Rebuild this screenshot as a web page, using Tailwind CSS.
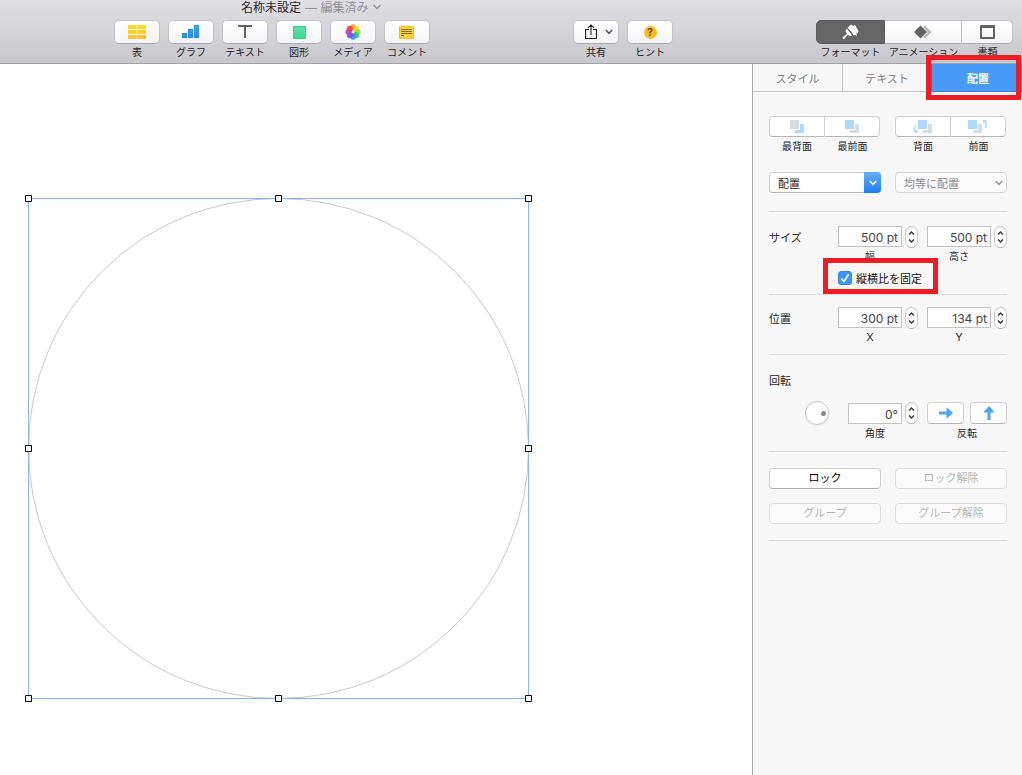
<!DOCTYPE html>
<html lang="ja">
<head>
    <meta charset="UTF-8">
    <meta name="viewport" content="width=device-width, initial-scale=1.0">
    <title>名称未設定</title>
    <script src="https://cdn.jsdelivr.net/npm/@tailwindcss/browser@4"></script>
</head>
<body class="relative flex flex-col min-h-screen bg-white text-[#262626] text-[11px] leading-4 font-['Inter','Noto_Sans_CJK_JP',sans-serif]">
    <!-- Toolbar -->
    <header class="h-16 shrink-0 border-b border-[#a2a1a6] bg-linear-to-b from-[#e0dfe3] to-[#c8c7cc]">
        <h1 class="h-5 pl-[241px] flex text-xs leading-4">
            <span>名称未設定</span>
            <span class="ml-1 text-[#929196]">— 編集済み</span>
            <svg class="ml-1 mt-1 w-2.5 h-1.5" viewBox="0 0 10 6" fill="none" stroke="#929196" stroke-width="1.3"><path d="M1.500 1l3.500 3.500L8.500 1"/></svg>
        </h1>
        <div class="flex text-[10px] leading-4 text-[#1c1c1e]">
            <div class="ml-[114px] flex gap-2">
                <div class="w-[46px] flex flex-col items-center whitespace-nowrap">
                    <button aria-labelledby="t1" class="w-full h-6 flex items-center justify-center rounded-[5px] border border-[#c3c2c7] border-b-[#adacb0] bg-linear-to-b from-white to-[#f4f4f4]">
                        <svg width="18" height="14" viewBox="0 0 18 14"><path fill="#fbdc2b" d="M0 0h18v5H0z"/><path fill="#fdce36" d="M0 5h18v4H0z"/><path fill="#fbc23a" d="M0 9h18v5H0z"/><path stroke="#fff6c8" d="M9 0v14M0 4.500h18M0 9.500h18"/></svg>
                    </button>
                    <span id="t1">表</span>
                </div>
                <div class="w-[46px] flex flex-col items-center whitespace-nowrap">
                    <button aria-labelledby="t2" class="w-full h-6 flex items-center justify-center rounded-[5px] border border-[#c3c2c7] border-b-[#adacb0] bg-linear-to-b from-white to-[#f4f4f4]">
                        <svg width="18" height="14" viewBox="0 0 18 14"><defs><linearGradient id="bar" x1="0" y1="0" x2="0" y2="1"><stop stop-color="#41b3ea"/><stop offset="1" stop-color="#2488e8"/></linearGradient></defs><path fill="url(#bar)" d="M0 8h5v5H0zM6 4h5v9H6zM12 0h5v13h-5z"/><path fill="none" stroke="#2a84d0" stroke-opacity=".6" d="M.5 8.500h4v4h-4zM6.500 4.500h4v8h-4zM12.500.500h4v12h-4z"/></svg>
                    </button>
                    <span id="t2">グラフ</span>
                </div>
                <div class="w-[46px] flex flex-col items-center whitespace-nowrap">
                    <button aria-labelledby="t3" class="w-full h-6 flex items-center justify-center rounded-[5px] border border-[#c3c2c7] border-b-[#adacb0] bg-linear-to-b from-white to-[#f4f4f4]">
                        <svg width="14" height="14" viewBox="0 0 14 14"><path fill="#636363" d="M0 0h14v2H8v11H6V2H0z"/></svg>
                    </button>
                    <span id="t3">テキスト</span>
                </div>
                <div class="w-[46px] flex flex-col items-center whitespace-nowrap">
                    <button aria-labelledby="t4" class="w-full h-6 flex items-center justify-center rounded-[5px] border border-[#c3c2c7] border-b-[#adacb0] bg-linear-to-b from-white to-[#f4f4f4]">
                        <span class="w-[13px] h-[13px] border border-[#3fcf91] bg-linear-to-b from-[#58dcb0] to-[#41dc90]"></span>
                    </button>
                    <span id="t4">図形</span>
                </div>
                <div class="w-[46px] flex flex-col items-center whitespace-nowrap">
                    <button aria-labelledby="t5" class="w-full h-6 flex items-center justify-center rounded-[5px] border border-[#c3c2c7] border-b-[#adacb0] bg-linear-to-b from-white to-[#f4f4f4]">
                        <svg width="16" height="16" viewBox="-8 -8 16 16" fill-opacity=".9">
                            <ellipse cy="-4.500" rx="2.800" ry="3.200" fill="#fb9a1e"/>
                            <ellipse cy="-4.500" rx="2.800" ry="3.200" fill="#f7dc2a" transform="rotate(45)"/>
                            <ellipse cy="-4.500" rx="2.800" ry="3.200" fill="#a8d63c" transform="rotate(90)"/>
                            <ellipse cy="-4.500" rx="2.800" ry="3.200" fill="#2fc76d" transform="rotate(135)"/>
                            <ellipse cy="-4.500" rx="2.800" ry="3.200" fill="#2f8fe6" transform="rotate(180)"/>
                            <ellipse cy="-4.500" rx="2.800" ry="3.200" fill="#6f50e0" transform="rotate(225)"/>
                            <ellipse cy="-4.500" rx="2.800" ry="3.200" fill="#c53bd6" transform="rotate(270)"/>
                            <ellipse cy="-4.500" rx="2.800" ry="3.200" fill="#f2383f" transform="rotate(315)"/>
                        </svg>
                    </button>
                    <span id="t5">メディア</span>
                </div>
                <div class="w-[46px] flex flex-col items-center whitespace-nowrap">
                    <button aria-labelledby="t6" class="w-full h-6 flex items-center justify-center rounded-[5px] border border-[#c3c2c7] border-b-[#adacb0] bg-linear-to-b from-white to-[#f4f4f4]">
                        <svg width="16" height="13" viewBox="0 0 16 13"><path fill="#fdd23a" stroke="#f0bc2a" d="M.5.500h14v12H.5z"/><path stroke="#8a6a1e" d="M2 3.500h11M2 5.500h11M2 7.500h11M2 9.500h3"/></svg>
                    </button>
                    <span id="t6">コメント</span>
                </div>
            </div>
            <div class="ml-[143px] flex gap-2">
                <div class="w-[46px] flex flex-col items-center whitespace-nowrap">
                    <button aria-labelledby="t7" class="w-full h-6 pl-1.5 flex items-center justify-center gap-2 rounded-[5px] border border-[#c3c2c7] border-b-[#adacb0] bg-linear-to-b from-white to-[#f4f4f4]">
                        <svg width="12" height="16" viewBox="0 0 12 16" fill="none" stroke="#222" stroke-width="1.100"><path d="M4 5.500H.600v9h10.800v-9H8M6 11V1M3 3.800L6 .900l3 2.900"/></svg>
                        <svg width="8" height="6" viewBox="0 0 8 6" fill="none" stroke="#555" stroke-width="1.500"><path d="M.800 1L4 4.300 7.200 1"/></svg>
                    </button>
                    <span id="t7">共有</span>
                </div>
                <div class="w-[46px] flex flex-col items-center whitespace-nowrap">
                    <button aria-labelledby="t8" class="w-full h-6 flex items-center justify-center rounded-[5px] border border-[#c3c2c7] border-b-[#adacb0] bg-linear-to-b from-white to-[#f4f4f4]">
                        <span class="w-[13px] h-[13px] rounded-full bg-[#fdb924] text-center text-[10px] leading-[13px] font-bold text-[#5f4310]">?</span>
                    </button>
                    <span id="t8">ヒント</span>
                </div>
            </div>
            <div class="ml-auto mr-[9px] flex">
                <div class="w-[69px] flex flex-col items-center whitespace-nowrap">
                    <button aria-labelledby="t9" class="w-full h-6 flex items-center justify-center rounded-l-[5px] border border-[#5b5b5c] bg-[#656566]">
                        <svg width="17" height="16" viewBox="0 0 17 16"><path fill="#fff" d="M5.500 3.800L9 .600l2.200 1.300L13 1l3.500 6.300-.8 2.500-1.200-1.500.2 4-1.700-1.600-1.200.900L9.500 8z"/><path fill="#fff" d="M5 4.600l5.200 7-2.600.300-1.800-1.500-3.200 4.300c-.7.800-2 .500-2.100-.6 0-.6.300-1 .8-1.300L5 9.800 3.400 7.200z"/><path stroke="#656566" stroke-width=".9" d="M5.500 4.500l5 6.200"/></svg>
                    </button>
                    <span id="t9">フォーマット</span>
                </div>
                <div class="w-[77px] flex flex-col items-center whitespace-nowrap">
                    <button aria-labelledby="t10" class="w-full h-6 flex items-center justify-center border-y border-r border-[#c3c2c7] border-b-[#adacb0] bg-linear-to-b from-white to-[#f4f4f4]">
                        <svg width="18" height="14" viewBox="0 0 18 14"><path fill="#b9b9b9" d="M9 2l2-1.500L17.500 7 11 13.500 9 12l5-5z"/><path fill="#636363" d="M6.500.500L13 7l-6.500 6.500L0 7z"/></svg>
                    </button>
                    <span id="t10">アニメーション</span>
                </div>
                <div class="w-[51px] flex flex-col items-center whitespace-nowrap">
                    <button aria-labelledby="t11" class="w-full h-6 flex items-center justify-center rounded-r-[5px] border-y border-r border-[#c3c2c7] border-b-[#adacb0] bg-linear-to-b from-white to-[#f4f4f4]">
                        <svg width="15" height="14" viewBox="0 0 15 14"><path fill="#636363" fill-rule="evenodd" d="M1 0h13a1 1 0 0 1 1 1v12a1 1 0 0 1-1 1H1a1 1 0 0 1-1-1V1a1 1 0 0 1 1-1zm1 3v9h11V3z"/></svg>
                    </button>
                    <span id="t11">書類</span>
                </div>
            </div>
        </div>
    </header>

    <div class="flex flex-1">
        <!-- Canvas -->
        <main class="relative flex-1">
            <svg class="absolute left-6 top-[130px]" width="510" height="510" viewBox="0 0 510 510" fill="none">
                <circle cx="254.500" cy="254.500" r="250" stroke="#c8c8c8"/>
                <path stroke="#8fb1f5" d="M4.500 4.500h500v500h-500z"/>
                <g fill="#fff" stroke="#000">
                    <path d="M1.500 1.500h6v6h-6zM251.500 1.500h6v6h-6zM501.500 1.500h6v6h-6z"/>
                    <path d="M1.500 251.500h6v6h-6zM501.500 251.500h6v6h-6z"/>
                    <path d="M1.500 501.500h6v6h-6zM251.500 501.500h6v6h-6zM501.500 501.500h6v6h-6z"/>
                </g>
            </svg>
        </main>

        <!-- Inspector -->
        <aside class="w-[270px] shrink-0 border-l border-[#a9a9a9] bg-[#f7f7f7]">
            <nav class="h-7 flex text-[#808080]">
                <button class="w-[90px] pt-0.5 border-r border-b border-[#c5c6c9]">スタイル</button>
                <button class="w-[89px] pt-0.5 border-r border-b border-[#c5c6c9] border-r-[#2f75c8]">テキスト</button>
                <button class="flex-1 pt-0.5 pl-0.5 border-b border-[#3b80d2] bg-[#489bf8] font-bold text-white">配置</button>
            </nav>
            <div class="pl-4 pr-[15px]">
                <section class="pt-6 pb-[18px] border-b border-[#dcdcdc]">
                    <div class="flex justify-between text-[10px] leading-[18px]">
                        <div class="w-[111px] flex">
                            <div class="w-14 flex flex-col items-center">
                                <button aria-labelledby="o1" class="w-full h-[21px] flex items-center justify-center rounded-l-[4px] border border-[#cfcfcf] border-b-[#b5b5b5] bg-white">
                                    <svg width="14" height="13" viewBox="0 0 14 13"><path fill="#afd9fc" d="M5 4h9v9H5z"/><path fill="#fff" d="M0 0h10v10H0z"/><path fill="#d6dce4" d="M0 0h9v9H0z"/></svg>
                                </button>
                                <span id="o1">最背面</span>
                            </div>
                            <div class="w-[55px] flex flex-col items-center">
                                <button aria-labelledby="o2" class="w-full h-[21px] flex items-center justify-center rounded-r-[4px] border-y border-r border-[#cfcfcf] border-b-[#b5b5b5] bg-white">
                                    <svg width="14" height="13" viewBox="0 0 14 13"><path fill="#d6dce4" d="M5 4h9v9H5z"/><path fill="#fff" d="M0 0h10v10H0z"/><path fill="#afd9fc" d="M0 0h9v9H0z"/></svg>
                                </button>
                                <span id="o2">最前面</span>
                            </div>
                        </div>
                        <div class="w-28 flex">
                            <div class="w-14 flex flex-col items-center">
                                <button aria-labelledby="o3" class="w-full h-[21px] flex items-center justify-center rounded-l-[4px] border border-[#cfcfcf] border-b-[#b5b5b5] bg-white">
                                    <svg width="20" height="14" viewBox="0 0 20 14"><path fill="#d6dce4" d="M10 4h9v9h-9z"/><path fill="#fff" d="M5 0h10v10H5z"/><path fill="#afd9fc" d="M5 0h9v9H5zM0 10.500l4.500-.5-.5 4z"/><path fill="none" stroke="#afd9fc" stroke-width="1.500" d="M3 5C.8 6.500.8 9 2.500 12"/></svg>
                                </button>
                                <span id="o3">背面</span>
                            </div>
                            <div class="w-[55px] flex flex-col items-center">
                                <button aria-labelledby="o4" class="w-full h-[21px] flex items-center justify-center rounded-r-[4px] border-y border-r border-[#cfcfcf] border-b-[#b5b5b5] bg-white">
                                    <svg width="20" height="14" viewBox="0 0 20 14"><path fill="#d6dce4" d="M5 4h9v9H5z"/><path fill="#fff" d="M0 0h10v10H0z"/><path fill="#afd9fc" d="M0 0h9v9H0zM14.500 0h4.500l-3.500 3.500z"/><path fill="none" stroke="#afd9fc" stroke-width="1.500" d="M17 8c2-2 2-4.500-.5-6.500"/></svg>
                                </button>
                                <span id="o4">前面</span>
                            </div>
                        </div>
                    </div>
                    <div class="mt-[17px] flex justify-between">
                        <div class="relative w-28">
                            <select aria-label="配置" class="w-full h-[21px] pl-2 pt-0.5 block appearance-none rounded-[4px] border border-[#cfcfcf] border-b-[#b5b5b5] bg-white">
                                <option>配置</option>
                            </select>
                            <span class="absolute right-0 top-0 w-[17px] h-[21px] flex items-center justify-center rounded-r-[4px] bg-linear-to-b from-[#65b0f8] to-[#1a7bfb] pointer-events-none">
                                <svg width="8" height="6" viewBox="0 0 8 6" fill="none" stroke="#fff" stroke-width="1.500"><path d="M.800 1L4 4.300 7.200 1"/></svg>
                            </span>
                        </div>
                        <div class="relative w-28">
                            <select aria-label="均等に配置" disabled class="w-full h-[21px] pl-2 pt-0.5 block appearance-none rounded-[4px] border border-[#d6d6d6] bg-[#fafafa] text-[#8a8a8a] opacity-100">
                                <option>均等に配置</option>
                            </select>
                            <svg class="absolute right-1 top-2 pointer-events-none" width="8" height="6" viewBox="0 0 8 6" fill="none" stroke="#999" stroke-width="1.500"><path d="M.800 1L4 4.300 7.200 1"/></svg>
                        </div>
                    </div>
                </section>

                <section class="pt-[14px] pb-[7px] border-b border-[#dcdcdc]">
                    <div class="flex">
                        <h2 class="w-[69px] leading-6">サイズ</h2>
                        <div class="flex gap-[9px]">
                            <div>
                                <div class="flex gap-[3px]">
                                    <input id="width" type="text" value="500 pt" class="w-16 h-[21px] pt-0.5 pr-[3px] border border-[#c2c2c2] bg-white text-right text-xs text-[#444]">
                                    <button aria-label="幅を増減" class="w-[13px] h-[22px] flex items-center justify-center rounded-full border border-[#c9c9c9] border-b-[#b2b2b2] bg-white">
                                        <svg width="7" height="12" viewBox="0 0 7 12" fill="none" stroke="#333" stroke-width="1.400"><path d="M1 3.500L3.500 1 6 3.500M1 8.500L3.500 11 6 8.500"/></svg>
                                    </button>
                                </div>
                                <label for="width" class="block w-16 text-center text-[10px] leading-4">幅</label>
                            </div>
                            <div>
                                <div class="flex gap-[3px]">
                                    <input id="height" type="text" value="500 pt" class="w-16 h-[21px] pt-0.5 pr-[3px] border border-[#c2c2c2] bg-white text-right text-xs text-[#444]">
                                    <button aria-label="高さを増減" class="w-[13px] h-[22px] flex items-center justify-center rounded-full border border-[#c9c9c9] border-b-[#b2b2b2] bg-white">
                                        <svg width="7" height="12" viewBox="0 0 7 12" fill="none" stroke="#333" stroke-width="1.400"><path d="M1 3.500L3.500 1 6 3.500M1 8.500L3.500 11 6 8.500"/></svg>
                                    </button>
                                </div>
                                <label for="height" class="block w-16 text-center text-[10px] leading-4">高さ</label>
                            </div>
                        </div>
                    </div>
                    <div class="relative mt-[7px] ml-[69px] w-fit h-4 flex gap-1 text-[#111]">
                        <span class="relative w-[14px] h-[14px]">
                            <input id="ratio" type="checkbox" checked class="block w-full h-full appearance-none rounded-[3px] border border-[#d0d0d0] bg-white checked:border-[#3a86e4] checked:bg-[#3f95f8]">
                            <svg class="absolute inset-0 pointer-events-none" width="14" height="14" viewBox="0 0 14 14" fill="none" stroke="#fff" stroke-width="1.600"><path d="M3.300 7.500L6 10.500 10.600 3.300"/></svg>
                        </span>
                        <label for="ratio">縦横比を固定</label>
                        <!-- Callout around the checkbox -->
                        <span class="absolute -left-[15px] -right-4 -top-[13px] -bottom-[7px] border-[5px] border-[#ee1c25] pointer-events-none"></span>
                    </div>
                </section>

                <section class="pt-3 pb-[9px] flex border-b border-[#dcdcdc]">
                    <h2 class="w-[69px] leading-6">位置</h2>
                    <div class="flex gap-[9px]">
                        <div>
                            <div class="flex gap-[3px]">
                                <input id="x" type="text" value="300 pt" class="w-16 h-[21px] pt-0.5 pr-[3px] border border-[#c2c2c2] bg-white text-right text-xs text-[#444]">
                                <button aria-label="Xを増減" class="w-[13px] h-[22px] flex items-center justify-center rounded-full border border-[#c9c9c9] border-b-[#b2b2b2] bg-white">
                                    <svg width="7" height="12" viewBox="0 0 7 12" fill="none" stroke="#333" stroke-width="1.400"><path d="M1 3.500L3.500 1 6 3.500M1 8.500L3.500 11 6 8.500"/></svg>
                                </button>
                            </div>
                            <label for="x" class="block w-16 text-center leading-4">X</label>
                        </div>
                        <div>
                            <div class="flex gap-[3px]">
                                <input id="y" type="text" value="134 pt" class="w-16 h-[21px] pt-0.5 pr-[3px] border border-[#c2c2c2] bg-white text-right text-xs text-[#444]">
                                <button aria-label="Yを増減" class="w-[13px] h-[22px] flex items-center justify-center rounded-full border border-[#c9c9c9] border-b-[#b2b2b2] bg-white">
                                    <svg width="7" height="12" viewBox="0 0 7 12" fill="none" stroke="#333" stroke-width="1.400"><path d="M1 3.500L3.500 1 6 3.500M1 8.500L3.500 11 6 8.500"/></svg>
                                </button>
                            </div>
                            <label for="y" class="block w-16 text-center leading-4">Y</label>
                        </div>
                    </div>
                </section>

                <section class="pt-[18px] pb-2.5 border-b border-[#dcdcdc]">
                    <h2>回転</h2>
                    <div class="mt-3 pl-9 flex items-start justify-between">
                        <button aria-label="回転ダイヤル" class="w-6 h-6 pr-0.5 flex items-center justify-end rounded-full border border-[#c6c6c6] bg-white shadow-xs">
                            <span class="w-[5px] h-[5px] rounded-full bg-[#858585]"></span>
                        </button>
                        <div class="pt-px flex gap-[9px]">
                            <div>
                                <div class="flex gap-[3px]">
                                    <input id="angle" type="text" value="0°" class="w-[54px] h-[21px] mt-px pt-0.5 pr-[3px] border border-[#c2c2c2] bg-white text-right text-xs text-[#444]">
                                    <button aria-label="角度を増減" class="w-[13px] h-[22px] flex items-center justify-center rounded-full border border-[#c9c9c9] border-b-[#b2b2b2] bg-white">
                                        <svg width="7" height="12" viewBox="0 0 7 12" fill="none" stroke="#333" stroke-width="1.400"><path d="M1 3.500L3.500 1 6 3.500M1 8.500L3.500 11 6 8.500"/></svg>
                                    </button>
                                </div>
                                <label for="angle" class="mt-px block w-[54px] text-center text-[10px] leading-4">角度</label>
                            </div>
                            <div>
                                <div class="flex gap-1.5">
                                    <button aria-label="水平方向に反転" class="w-[37px] h-[22px] flex items-center justify-center rounded-[4px] border border-[#cfcfcf] border-b-[#b5b5b5] bg-white">
                                        <svg width="14" height="12" viewBox="0 0 14 12"><path fill="#4ba3fa" d="M0 4.500h7.500V.300L14 6l-6.500 5.700V7.500H0z"/></svg>
                                    </button>
                                    <button aria-label="垂直方向に反転" class="w-[37px] h-[22px] flex items-center justify-center rounded-[4px] border border-[#cfcfcf] border-b-[#b5b5b5] bg-white">
                                        <svg width="12" height="14" viewBox="0 0 12 14"><path fill="#4ba3fa" d="M4.500 14V6.500H.300L6 0l5.700 6.500H7.500V14z"/></svg>
                                    </button>
                                </div>
                                <p class="mt-px text-center text-[10px] leading-4">反転</p>
                            </div>
                        </div>
                    </div>
                </section>

                <section class="pt-4 pb-4 grid grid-cols-2 gap-[14px] border-b border-[#dcdcdc]">
                    <button class="h-[21px] leading-[19px] rounded-[4px] border border-[#cfcfcf] border-b-[#b0b0b0] bg-white text-black">ロック</button>
                    <button disabled class="h-[21px] leading-[19px] rounded-[4px] border border-[#dcdcdc] bg-[#fafafa] text-[#b5b5b5]">ロック解除</button>
                    <button disabled class="h-[21px] leading-[19px] rounded-[4px] border border-[#dcdcdc] bg-[#fafafa] text-[#b5b5b5]">グループ</button>
                    <button disabled class="h-[21px] leading-[19px] rounded-[4px] border border-[#dcdcdc] bg-[#fafafa] text-[#b5b5b5]">グループ解除</button>
                </section>
            </div>
        </aside>
    </div>

    <!-- Callout around the arrange tab -->
    <div class="absolute right-px top-[55px] w-[95px] h-[45px] border-[5px] border-[#ee1c25] pointer-events-none"></div>
</body>
</html>
